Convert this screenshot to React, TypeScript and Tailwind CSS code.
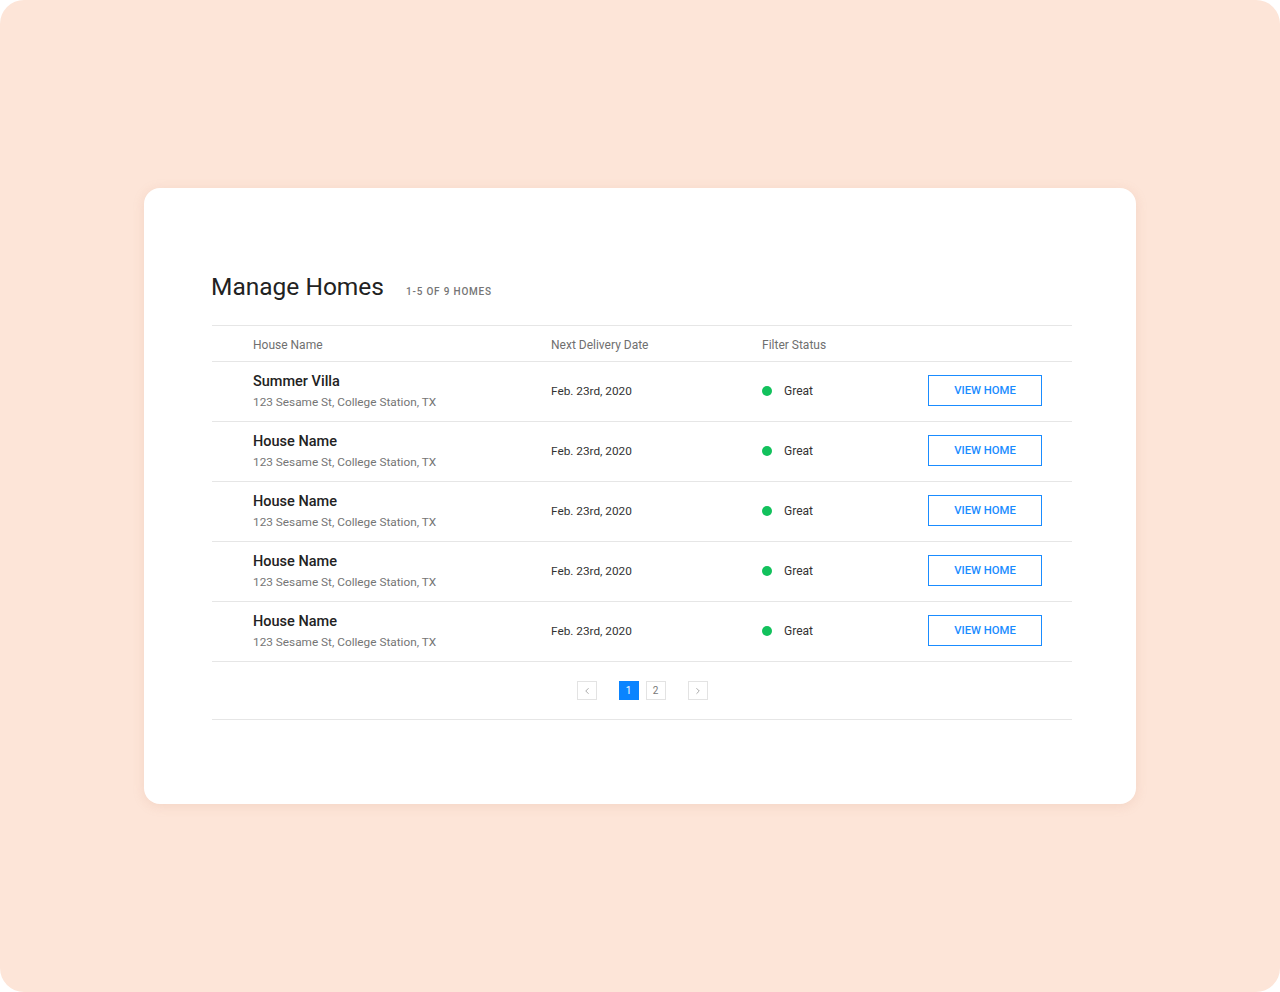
import { ChevronLeft, ChevronRight } from 'lucide-react';

type Home = { name: string; address: string; delivery: string; status: string };

const homes: Home[] = [
  { name: 'Summer Villa', address: '123 Sesame St, College Station, TX', delivery: 'Feb. 23rd, 2020', status: 'Great' },
  { name: 'House Name', address: '123 Sesame St, College Station, TX', delivery: 'Feb. 23rd, 2020', status: 'Great' },
  { name: 'House Name', address: '123 Sesame St, College Station, TX', delivery: 'Feb. 23rd, 2020', status: 'Great' },
  { name: 'House Name', address: '123 Sesame St, College Station, TX', delivery: 'Feb. 23rd, 2020', status: 'Great' },
  { name: 'House Name', address: '123 Sesame St, College Station, TX', delivery: 'Feb. 23rd, 2020', status: 'Great' },
];

const cols = 'grid grid-cols-[298px_211px_166px_114px] pl-[41px] items-center';

function HomeRow({ home }: { home: Home }) {
  return (
    <div className={`${cols} h-[60px] border-b border-[#e6e6e6]`}>
      <div className="flex flex-col">
        <span className="text-[14.5px] leading-[18px] font-medium text-[#222]">{home.name}</span>
        <span className="mt-[3px] text-[11.8px] leading-[16px] text-[#757575]">{home.address}</span>
      </div>
      <span className="text-[11.8px] text-[#333]">{home.delivery}</span>
      <div className="flex items-center gap-3 -mt-[2px]">
        <span className="h-[10px] w-[10px] rounded-full bg-[#12c15c]" />
        <span className="text-[12px] text-[#333]">{home.status}</span>
      </div>
      <button className="h-[31px] w-[114px] -mt-[2px] border-[1.5px] border-[#1a8cff] pt-[1px] text-[11.3px] font-medium text-[#1a8cff]">
        VIEW HOME
      </button>
    </div>
  );
}

function PageBox({ children, active }: { children: React.ReactNode; active?: boolean }) {
  return (
    <div
      className={
        active
          ? 'flex h-[19px] w-[20px] items-center justify-center bg-[#0a84ff] text-[10px] text-white'
          : 'flex h-[19px] w-[20px] items-center justify-center border border-[#e3e3e3] bg-white text-[10px] text-[#777]'
      }
    >
      {children}
    </div>
  );
}

export default function App() {
  return (
    <div className="h-[992px] w-[1280px] bg-white" style={{ fontFamily: 'Roboto, "Noto Sans", sans-serif' }}>
      <div className="flex h-full w-full items-center justify-center rounded-[24px] bg-[#fde5d8]">
        <div className="h-[616px] w-[992px] rounded-[16px] bg-white pl-[68px] pr-[64px] pt-[83px] shadow-[0_2px_12px_rgba(200,140,110,0.18)]">
          <div className="flex items-baseline">
            <h1 className="-ml-[1px] text-[24.5px] leading-[32px] text-[#222]">Manage Homes</h1>
            <span className="ml-[22px] text-[10px] font-medium tracking-[0.08em] text-[#757575]">1-5 OF 9 HOMES</span>
          </div>
          <div className="mt-[22px] border-t border-[#e6e6e6]">
            <div className={`${cols} h-[36px] border-b border-[#e6e6e6] pt-[3px] text-[12px] text-[#6f6f6f]`}>
              <span>House Name</span>
              <span>Next Delivery Date</span>
              <span>Filter Status</span>
              <span />
            </div>
            {homes.map((home, i) => (
              <HomeRow key={i} home={home} />
            ))}
            <div className="flex h-[58px] items-center justify-center border-b border-[#e6e6e6]">
              <PageBox>
                <ChevronLeft size={10} strokeWidth={1.5} />
              </PageBox>
              <div className="ml-[22px] flex gap-[7px]">
                <PageBox active>1</PageBox>
                <PageBox>2</PageBox>
              </div>
              <div className="ml-[22px]">
                <PageBox>
                  <ChevronRight size={10} strokeWidth={1.5} />
                </PageBox>
              </div>
            </div>
          </div>
        </div>
      </div>
    </div>
  );
}
